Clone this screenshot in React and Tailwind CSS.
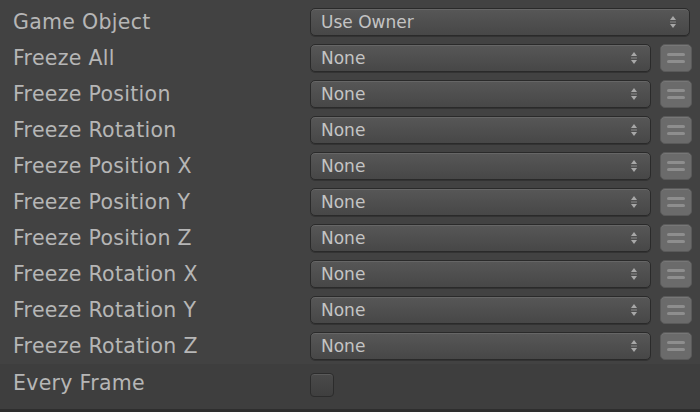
import React from 'react';

const rows = [
  'Freeze All',
  'Freeze Position',
  'Freeze Rotation',
  'Freeze Position X',
  'Freeze Position Y',
  'Freeze Position Z',
  'Freeze Rotation X',
  'Freeze Rotation Y',
  'Freeze Rotation Z',
];

function Arrows() {
  return (
    <svg width="8" height="14" viewBox="0 0 8 14" className="shrink-0">
      <path d="M4 1 L7 5 L1 5 Z" fill="#a8a8a8" />
      <rect x="1" y="6.5" width="6" height="1" fill="#8a8a8a" />
      <path d="M1 9 L7 9 L4 13 Z" fill="#a8a8a8" />
    </svg>
  );
}

function Dropdown({ value, className }) {
  return (
    <div
      className={
        'h-[28px] flex items-center justify-between pl-[10px] pr-[12px] rounded-[5px] border border-[#2a2a2a] bg-gradient-to-b from-[#575757] to-[#474747] shadow-[inset_0_1px_0_#666,0_1px_0_#333] ' +
        className
      }
    >
      <span className="text-[17px] text-[#c4c4c4] leading-none">{value}</span>
      <Arrows />
    </div>
  );
}

function MenuButton() {
  return (
    <div className="w-[32px] h-[28px] rounded-[5px] bg-[#6b6b6b] border border-[#5a5a5a] flex flex-col items-center justify-center gap-[4px] shadow-[inset_0_1px_0_#777]">
      <div className="w-[18px] h-[3px] rounded-full bg-[#8e8e8e]" />
      <div className="w-[18px] h-[3px] rounded-full bg-[#8e8e8e]" />
    </div>
  );
}

function Label({ children }) {
  return (
    <div className="w-[310px] pl-[13px] text-[20.5px] tracking-[0.3px] text-[#b6b6b6] leading-none">
      {children}
    </div>
  );
}

export default function App() {
  return (
    <div
      className="w-[700px] h-[412px] bg-[#3e3e3e] flex flex-col overflow-hidden"
      style={{ fontFamily: '"DejaVu Sans", "Liberation Sans", sans-serif' }}
    >
      <div className="bg-[#424242] pt-[4px]">
        <div className="h-[36px] flex items-center">
          <Label>Game Object</Label>
          <Dropdown value="Use Owner" className="w-[380px]" />
        </div>
        {rows.map((r) => (
          <div key={r} className="h-[36px] flex items-center">
            <Label>{r}</Label>
            <Dropdown value="None" className="w-[341px]" />
            <div className="ml-[9px]">
              <MenuButton />
            </div>
          </div>
        ))}
      </div>
      <div className="h-[38px] flex items-center">
        <Label>Every Frame</Label>
        <div className="mt-[3px] w-[24px] h-[24px] rounded-[4px] border border-[#2c2c2c] bg-gradient-to-b from-[#4a4a4a] to-[#3f3f3f] shadow-[inset_0_1px_0_#5a5a5a]" />
      </div>
      <div className="flex-1" />
      <div className="h-[3px] bg-[#2e2e2e]" />
    </div>
  );
}
